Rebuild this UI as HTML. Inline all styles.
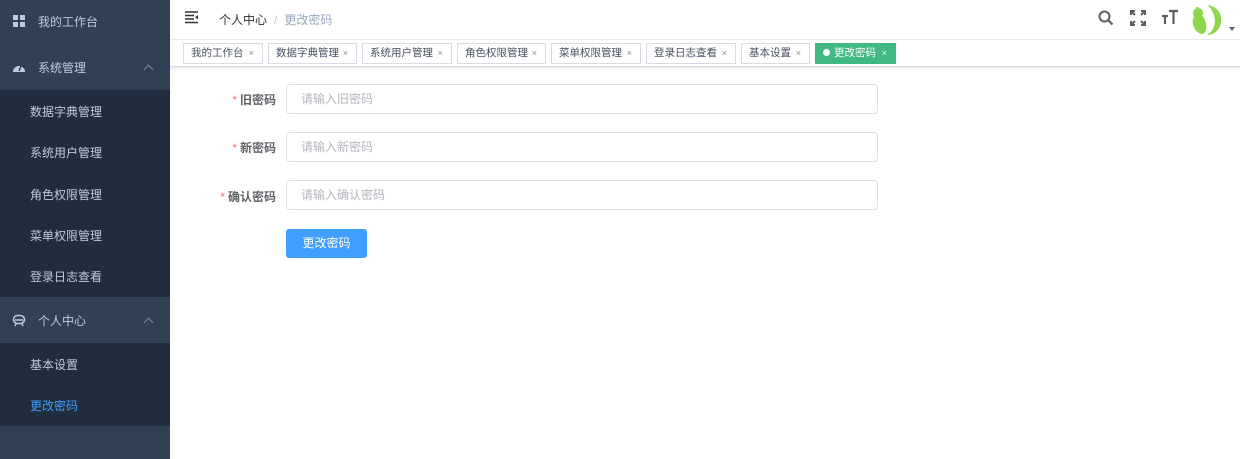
<!DOCTYPE html><html><head><meta charset="utf-8"><style>
*{margin:0;padding:0;box-sizing:border-box}
body{width:1240px;height:459px;overflow:hidden;font-family:"Liberation Sans","Noto Sans CJK SC",sans-serif;background:#fff;position:relative}
.side{position:absolute;left:0;top:0;width:170px;height:459px;background:#304156;color:#bfcbd9;font-size:12px}
.it{position:absolute;left:0;width:170px;display:flex;align-items:center}
.sub{background:#1f2d3d}
.arrow{position:absolute;right:18px;width:7px;height:7px;border-left:1px solid #7a8696;border-top:1px solid #7a8696;transform:rotate(45deg)}
.hdr{position:absolute;left:170px;top:0;right:0;height:40px;border-bottom:1px solid #eee}
.tags{position:absolute;left:170px;top:40px;right:0;height:27px;border-bottom:1px solid #d8dce5;box-shadow:0 1px 3px rgba(0,0,0,.12)}
.tag{position:absolute;top:3px;height:21px;border:1px solid #d8dce5;font-size:10.5px;color:#495060;line-height:19px;padding-left:7px;background:#fff}
.tag span{position:absolute;right:8px;top:0;font-size:9px;color:#888}
.lab{position:absolute;width:106px;text-align:right;font-size:12px;font-weight:bold;color:#606266}
.lab b{color:#f56c6c;font-weight:normal;margin-right:3px}
.inp{position:absolute;left:286px;width:592px;height:30px;border:1px solid #dcdfe6;border-radius:4px;font-size:12px;color:#b4b7bd;line-height:28px;padding-left:14px}
</style></head><body>
<div class="side">
<div class="it" style="top:0;height:42px"><svg style="margin-left:13px" width="12" height="12"><rect x="0" y="0" width="5" height="5" fill="#bfcbd9"/><rect x="7" y="0" width="5" height="5" fill="#bfcbd9"/><rect x="0" y="7" width="5" height="5" fill="#bfcbd9"/><rect x="7" y="7" width="5" height="5" fill="#bfcbd9"/></svg><span style="margin-left:13px">我的工作台</span></div>
<div class="it" style="top:45px;height:45px"><svg style="margin-left:12px" width="14" height="12" viewBox="0 0 14 12"><path d="M1 10A6 6 0 1 1 13 10Z" fill="#bfcbd9"/><path d="M7 9L9 4" stroke="#304156" stroke-width="1.5"/></svg><span style="margin-left:12px">系统管理</span><i class="arrow" style="top:21px"></i></div>
<div class="sub" style="position:absolute;top:90px;left:0;width:170px;height:207px"></div>
<div class="it" style="top:91px;height:41px"><span style="margin-left:30px">数据字典管理</span></div>
<div class="it" style="top:132px;height:41px"><span style="margin-left:30px">系统用户管理</span></div>
<div class="it" style="top:174px;height:41px"><span style="margin-left:30px">角色权限管理</span></div>
<div class="it" style="top:215px;height:41px"><span style="margin-left:30px">菜单权限管理</span></div>
<div class="it" style="top:256px;height:41px"><span style="margin-left:30px">登录日志查看</span></div>
<div class="it" style="top:297px;height:46px"><svg style="margin-left:12px" width="14" height="13" viewBox="0 0 14 13"><rect x="1.5" y="1.5" width="11" height="8" rx="4" fill="none" stroke="#bfcbd9" stroke-width="1.6"/><path d="M3 6h8M4 10l-1 2M10 10l1 2" stroke="#bfcbd9" stroke-width="1.5"/></svg><span style="margin-left:12px">个人中心</span><i class="arrow" style="top:22px"></i></div>
<div class="sub" style="position:absolute;top:343px;left:0;width:170px;height:83px"></div>
<div class="it" style="top:344px;height:41px"><span style="margin-left:30px">基本设置</span></div>
<div class="it" style="top:385px;height:41px;color:#409eff"><span style="margin-left:30px">更改密码</span></div>
</div>
<div class="hdr">
<svg style="position:absolute;left:15px;top:11px" width="14" height="13"><path d="M0 1h13M0 4.5h9M0 8h9M0 11.5h13" stroke="#333" stroke-width="1.5"/><path d="M13 4l-3 2.2 3 2.2z" fill="#333"/></svg>
<div style="position:absolute;left:49px;top:11px;font-size:12px;color:#303133">个人中心<span style="color:#c0c4cc;margin:0 7px">/</span><span style="color:#97a8be">更改密码</span></div>
<svg style="position:absolute;left:928px;top:10px" width="16" height="16"><circle cx="6.5" cy="6.5" r="5" fill="none" stroke="#5a5e66" stroke-width="2"/><path d="M10 10l4.5 4.5" stroke="#5a5e66" stroke-width="2.2"/></svg>
<svg style="position:absolute;left:960px;top:10px" width="16" height="16" fill="none" stroke="#5a5e66" stroke-width="2"><path d="M1 5V1h4M11 1h4v4M15 11v4h-4M5 15H1v-4M2 2l3 3M14 2l-3 3M14 14l-3-3M2 14l3-3"/></svg>
<svg style="position:absolute;left:991px;top:9px" width="18" height="16"><path d="M1 7h6M4 7v8M8 2h9M12.5 2v13" stroke="#5a5e66" stroke-width="2.2"/></svg>
<svg style="position:absolute;left:1018px;top:3px" width="36" height="34" viewBox="0 0 36 34"><path d="M20 2c10 2 14 9 13 17-1 8-7 13-14 13 5-3 8-8 8-14 0-6-3-11-7-16z" fill="#8ed64a"/><path d="M11 11c-5 0-7 5-6 10 1 6 5 10 10 10 3-2 4-6 3-10-1-5-3-9-7-10z" fill="#8ed64a"/><circle cx="10" cy="10" r="5" fill="#8ed64a"/><path d="M8 4l1 3 2-3z" fill="#8ed64a"/></svg>
<div style="position:absolute;left:1059px;top:27px;border:3px solid transparent;border-top:4px solid #5a5e66"></div>
</div>
<div class="tags">
<div class="tag" style="left:13px;width:80px">我的工作台<span>×</span></div>
<div class="tag" style="left:98px;width:89px">数据字典管理<span>×</span></div>
<div class="tag" style="left:192px;width:90px">系统用户管理<span>×</span></div>
<div class="tag" style="left:287px;width:89px">角色权限管理<span>×</span></div>
<div class="tag" style="left:381px;width:90px">菜单权限管理<span>×</span></div>
<div class="tag" style="left:476px;width:90px">登录日志查看<span>×</span></div>
<div class="tag" style="left:571px;width:69px">基本设置<span>×</span></div>
<div class="tag" style="left:645px;width:81px;background:#42b983;border-color:#42b983;color:#fff"><i style="display:inline-block;width:7px;height:7px;border-radius:50%;background:#fff;margin-right:4px"></i>更改密码<span style="color:#fff">×</span></div>
</div>
<div class="lab" style="left:170px;top:91px"><b>*</b>旧密码</div>
<div class="inp" style="top:84px">请输入旧密码</div>
<div class="lab" style="left:170px;top:139px"><b>*</b>新密码</div>
<div class="inp" style="top:132px">请输入新密码</div>
<div class="lab" style="left:170px;top:188px"><b>*</b>确认密码</div>
<div class="inp" style="top:180px">请输入确认密码</div>
<div style="position:absolute;left:286px;top:229px;width:81px;height:29px;background:#409eff;border-radius:3px;color:#fff;font-size:12px;text-align:center;line-height:29px">更改密码</div>
</body></html>
